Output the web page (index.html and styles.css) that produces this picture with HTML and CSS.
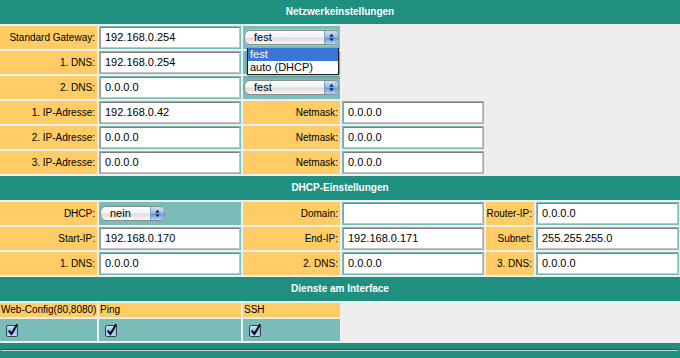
FILE: index.html
```html
<!DOCTYPE html>
<html lang="de">
<head>
<meta charset="utf-8">
<title>Netzwerkeinstellungen</title>
<link rel="stylesheet" href="styles.css">
</head>
<body>
<div class="page">
  <div class="hdr">Netzwerkeinstellungen</div>
  <div class="section">
    <div class="row">
      <div class="lbl">Standard Gateway:</div>
      <div class="val"><input class="txt" type="text" value="192.168.0.254"></div>
      <div class="val selcell">
        <span class="sel w95 focus"><span class="sel-text">fest</span><span class="sel-btn"><svg width="5" height="9" viewBox="0 0 5 9"><path d="M0.3 3.8 L2.5 0.8 L4.7 3.8 Z M0.3 5.2 L2.5 8.2 L4.7 5.2 Z" fill="#1c2430"/></svg></span></span>
        <ul class="menu">
          <li class="on">fest</li>
          <li>auto (DHCP)</li>
        </ul>
      </div>
    </div>
    <div class="row">
      <div class="lbl">1. DNS:</div>
      <div class="val"><input class="txt" type="text" value="192.168.0.254"></div>
      <div class="val"></div>
    </div>
    <div class="row">
      <div class="lbl">2. DNS:</div>
      <div class="val"><input class="txt" type="text" value="0.0.0.0"></div>
      <div class="val selcell">
        <span class="sel w95"><span class="sel-text">fest</span><span class="sel-btn"><svg width="5" height="9" viewBox="0 0 5 9"><path d="M0.3 3.8 L2.5 0.8 L4.7 3.8 Z M0.3 5.2 L2.5 8.2 L4.7 5.2 Z" fill="#1c2430"/></svg></span></span>
      </div>
    </div>
    <div class="row">
      <div class="lbl">1. IP-Adresse:</div>
      <div class="val"><input class="txt" type="text" value="192.168.0.42"></div>
      <div class="lbl">Netmask:</div>
      <div class="val"><input class="txt" type="text" value="0.0.0.0"></div>
    </div>
    <div class="row">
      <div class="lbl">2. IP-Adresse:</div>
      <div class="val"><input class="txt" type="text" value="0.0.0.0"></div>
      <div class="lbl">Netmask:</div>
      <div class="val"><input class="txt" type="text" value="0.0.0.0"></div>
    </div>
    <div class="row">
      <div class="lbl">3. IP-Adresse:</div>
      <div class="val"><input class="txt" type="text" value="0.0.0.0"></div>
      <div class="lbl">Netmask:</div>
      <div class="val"><input class="txt" type="text" value="0.0.0.0"></div>
    </div>
  </div>

  <div class="hdr">DHCP-Einstellungen</div>
  <div class="section">
    <div class="row">
      <div class="lbl">DHCP:</div>
      <div class="val selcell">
        <span class="sel w65"><span class="sel-text">nein</span><span class="sel-btn"><svg width="5" height="9" viewBox="0 0 5 9"><path d="M0.3 3.8 L2.5 0.8 L4.7 3.8 Z M0.3 5.2 L2.5 8.2 L4.7 5.2 Z" fill="#1c2430"/></svg></span></span>
      </div>
      <div class="lbl">Domain:</div>
      <div class="val"><input class="txt" type="text" value=""></div>
      <div class="lbl">Router-IP:</div>
      <div class="val"><input class="txt" type="text" value="0.0.0.0"></div>
    </div>
    <div class="row">
      <div class="lbl">Start-IP:</div>
      <div class="val"><input class="txt" type="text" value="192.168.0.170"></div>
      <div class="lbl">End-IP:</div>
      <div class="val"><input class="txt" type="text" value="192.168.0.171"></div>
      <div class="lbl">Subnet:</div>
      <div class="val"><input class="txt" type="text" value="255.255.255.0"></div>
    </div>
    <div class="row">
      <div class="lbl">1. DNS:</div>
      <div class="val"><input class="txt" type="text" value="0.0.0.0"></div>
      <div class="lbl">2. DNS:</div>
      <div class="val"><input class="txt" type="text" value="0.0.0.0"></div>
      <div class="lbl">3. DNS:</div>
      <div class="val"><input class="txt" type="text" value="0.0.0.0"></div>
    </div>
  </div>

  <div class="hdr">Dienste am Interface</div>
  <div class="section">
    <div class="row row-head">
      <div class="lbl lbl-left">Web-Config(80,8080)</div>
      <div class="lbl lbl-left">Ping</div>
      <div class="lbl lbl-left">SSH</div>
    </div>
    <div class="row row-check">
      <div class="val chk"><svg class="cb" width="13" height="14" viewBox="0 0 13 14"><defs><linearGradient id="g1" x1="0" y1="0" x2="0" y2="1"><stop offset="0" stop-color="#dcebfb"/><stop offset="0.5" stop-color="#8dbaf0"/><stop offset="1" stop-color="#c6defa"/></linearGradient></defs><rect x="0.5" y="2.5" width="11" height="11" rx="1.5" fill="url(#g1)" stroke="#34435a"/><path d="M2.8 7.6 L5.4 11 L11.2 1.2" fill="none" stroke="#0c0c0c" stroke-width="2.1"/></svg></div>
      <div class="val chk"><svg class="cb" width="13" height="14" viewBox="0 0 13 14"><rect x="0.5" y="2.5" width="11" height="11" rx="1.5" fill="url(#g1)" stroke="#34435a"/><path d="M2.8 7.6 L5.4 11 L11.2 1.2" fill="none" stroke="#0c0c0c" stroke-width="2.1"/></svg></div>
      <div class="val chk"><svg class="cb" width="13" height="14" viewBox="0 0 13 14"><rect x="0.5" y="2.5" width="11" height="11" rx="1.5" fill="url(#g1)" stroke="#34435a"/><path d="M2.8 7.6 L5.4 11 L11.2 1.2" fill="none" stroke="#0c0c0c" stroke-width="2.1"/></svg></div>
    </div>
  </div>

  <div class="foot"><hr class="rule"></div>
</div>
</body>
</html>
```

FILE: styles.css
```css
html, body {
  margin: 0;
  padding: 0;
  background: #eeeeee;
}

body {
  font-family: "Liberation Sans", Arial, sans-serif;
  font-size: 10px;
  color: #000;
}

.page {
  width: 680px;
  display: flex;
  flex-direction: column;
  gap: 2px;
}

.hdr {
  height: 24px;
  line-height: 24px;
  background: #1f8f80;
  color: #fff;
  font-weight: bold;
  font-size: 10px;
  text-align: center;
}

.section {
  display: flex;
  flex-direction: column;
  gap: 2px;
}

.row {
  display: grid;
  grid-template-columns: 97px 142px 97px 142px 48px 143px;
  column-gap: 2px;
  height: 23px;
}

.lbl {
  background: #ffcc66;
  text-align: right;
  padding-right: 2px;
  line-height: 23px;
  white-space: nowrap;
  overflow: hidden;
}

.lbl-left {
  text-align: left;
  padding: 0 0 0 1px;
  line-height: 14px;
}

.row-head {
  height: 14px;
}

.row-check {
  height: 22px;
}

.val {
  background: #79bcb8;
  padding: 1px;
  box-sizing: border-box;
  position: relative;
}

.txt {
  display: block;
  width: 100%;
  height: 100%;
  box-sizing: border-box;
  margin: 0;
  border: 1px solid;
  border-color: #7d7d7d #c4c4c4 #c4c4c4 #9a9a9a;
  background: #fff;
  padding: 0 0 1px 4px;
  font-family: "Liberation Sans", Arial, sans-serif;
  font-size: 11px;
  color: #000;
  outline: none;
}

.selcell {
  display: flex;
  align-items: center;
  padding: 0 0 0 1px;
}

.sel {
  display: inline-flex;
  height: 15px;
  box-sizing: border-box;
  border: 1px solid #8c8c8c;
  border-radius: 6px;
  overflow: hidden;
  background: linear-gradient(#ffffff, #f2f2f2 45%, #dedede 55%, #f6f6f6);
  font-size: 11px;
}

.w95 { width: 95px; }
.w65 { width: 65px; }

.focus {
  box-shadow: 0 0 0 1px #9fc4ee;
}

.sel-text {
  flex: 1;
  padding-left: 9px;
  line-height: 13px;
}

.sel-btn {
  width: 13px;
  border-left: 1px solid #7f9cc2;
  background: linear-gradient(#d2e4f8, #93bdef 45%, #5f9be3 55%, #b4d4f6);
  display: flex;
  align-items: center;
  justify-content: center;
}

.menu {
  position: absolute;
  left: 4px;
  top: 22px;
  width: 92px;
  margin: 0;
  padding: 0;
  list-style: none;
  background: #fff;
  border: 1px solid #1c1c1c;
  border-top: 0;
  box-sizing: border-box;
  box-shadow: 0 2px 3px rgba(0, 0, 0, 0.25);
  z-index: 5;
}

.menu li {
  height: 13px;
  line-height: 13px;
  padding-left: 2px;
  font-size: 11px;
}

.menu li.on {
  background: #3a76d7;
  color: #fff;
}

.chk {
  display: flex;
  align-items: center;
  padding: 0 0 0 6px;
}

.cb {
  display: block;
  margin-top: -1px;
}

.foot {
  height: 20px;
  background: #1f8f80;
  padding-top: 6px;
  box-sizing: border-box;
}

.rule {
  margin: 0 2px 0 1px;
  height: 0;
  border: 0;
  border-top: 1px solid #4a4a4a;
  border-bottom: 1px solid #d6d6d6;
}
```
